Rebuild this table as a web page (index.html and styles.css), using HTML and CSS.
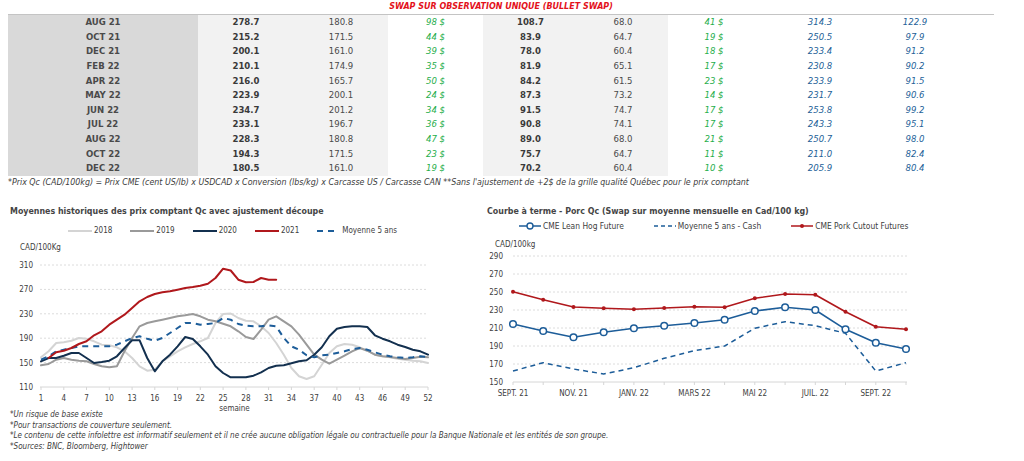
FILE: index.html
```html
<!DOCTYPE html>
<html lang="fr">
<head>
<meta charset="utf-8">
<title>Swap porc</title>
<link rel="stylesheet" href="styles.css">
</head>
<body>
<div class="banner">SWAP SUR OBSERVATION UNIQUE (BULLET SWAP)</div>
<table class="prices">
  <colgroup>
    <col class="c1"><col class="c2"><col class="c3"><col class="c4"><col class="c5"><col class="c6"><col class="c7"><col class="c8"><col class="c9"><col class="c10">
  </colgroup>
  <tbody>
    <tr><td class="m">AUG 21</td><td class="b">278.7</td><td class="n">180.8</td><td class="g">98 $</td><td class="b">108.7</td><td class="n">68.0</td><td class="g">41 $</td><td class="u">314.3</td><td class="u">122.9</td><td></td></tr>
    <tr><td class="m">OCT 21</td><td class="b">215.2</td><td class="n">171.5</td><td class="g">44 $</td><td class="b">83.9</td><td class="n">64.7</td><td class="g">19 $</td><td class="u">250.5</td><td class="u">97.9</td><td></td></tr>
    <tr><td class="m">DEC 21</td><td class="b">200.1</td><td class="n">161.0</td><td class="g">39 $</td><td class="b">78.0</td><td class="n">60.4</td><td class="g">18 $</td><td class="u">233.4</td><td class="u">91.2</td><td></td></tr>
    <tr><td class="m">FEB 22</td><td class="b">210.1</td><td class="n">174.9</td><td class="g">35 $</td><td class="b">81.9</td><td class="n">65.1</td><td class="g">17 $</td><td class="u">230.8</td><td class="u">90.2</td><td></td></tr>
    <tr><td class="m">APR 22</td><td class="b">216.0</td><td class="n">165.7</td><td class="g">50 $</td><td class="b">84.2</td><td class="n">61.5</td><td class="g">23 $</td><td class="u">233.9</td><td class="u">91.5</td><td></td></tr>
    <tr><td class="m">MAY 22</td><td class="b">223.9</td><td class="n">200.1</td><td class="g">24 $</td><td class="b">87.3</td><td class="n">73.2</td><td class="g">14 $</td><td class="u">231.7</td><td class="u">90.6</td><td></td></tr>
    <tr><td class="m">JUN 22</td><td class="b">234.7</td><td class="n">201.2</td><td class="g">34 $</td><td class="b">91.5</td><td class="n">74.7</td><td class="g">17 $</td><td class="u">253.8</td><td class="u">99.2</td><td></td></tr>
    <tr><td class="m">JUL 22</td><td class="b">233.1</td><td class="n">196.7</td><td class="g">36 $</td><td class="b">90.8</td><td class="n">74.1</td><td class="g">17 $</td><td class="u">243.3</td><td class="u">95.1</td><td></td></tr>
    <tr><td class="m">AUG 22</td><td class="b">228.3</td><td class="n">180.8</td><td class="g">47 $</td><td class="b">89.0</td><td class="n">68.0</td><td class="g">21 $</td><td class="u">250.7</td><td class="u">98.0</td><td></td></tr>
    <tr><td class="m">OCT 22</td><td class="b">194.3</td><td class="n">171.5</td><td class="g">23 $</td><td class="b">75.7</td><td class="n">64.7</td><td class="g">11 $</td><td class="u">211.0</td><td class="u">82.4</td><td></td></tr>
    <tr><td class="m">DEC 22</td><td class="b">180.5</td><td class="n">161.0</td><td class="g">19 $</td><td class="b">70.2</td><td class="n">60.4</td><td class="g">10 $</td><td class="u">205.9</td><td class="u">80.4</td><td></td></tr>
  </tbody>
</table>
<p class="footnote">*Prix Qc (CAD/100kg) = Prix CME (cent US/lb) x USDCAD x Conversion (lbs/kg) x Carcasse US / Carcasse CAN **Sans l'ajustement de +2$ de la grille qualité Québec pour le prix comptant</p>

<div class="charts">
  <section class="chart chart-left">
    <h2 class="chart-title">Moyennes historiques des prix comptant Qc avec ajustement découpe</h2>
    <ul class="legend legend-left">
      <li><svg class="swatch" width="24" height="6"><line x1="0" y1="3" x2="24" y2="3" stroke="#d4d4d4" stroke-width="2"/></svg>2018</li>
      <li><svg class="swatch" width="24" height="6"><line x1="0" y1="3" x2="24" y2="3" stroke="#9a9a9a" stroke-width="2"/></svg>2019</li>
      <li><svg class="swatch" width="24" height="6"><line x1="0" y1="3" x2="24" y2="3" stroke="#13304f" stroke-width="2"/></svg>2020</li>
      <li><svg class="swatch" width="24" height="6"><line x1="0" y1="3" x2="24" y2="3" stroke="#b0181c" stroke-width="2"/></svg>2021</li>
      <li class="wide"><svg class="swatch" width="24" height="6"><line x1="0" y1="3" x2="17" y2="3" stroke="#1d5d99" stroke-width="2" stroke-dasharray="6 5"/></svg>Moyenne 5 ans</li>
    </ul>
    <svg class="plot" width="460" height="174" viewBox="0 238 460 174">
      <g class="grid">
        <line x1="40" y1="265" x2="428" y2="265"/>
        <line x1="40" y1="289.4" x2="428" y2="289.4"/>
        <line x1="40" y1="313.8" x2="428" y2="313.8"/>
        <line x1="40" y1="338.2" x2="428" y2="338.2"/>
        <line x1="40" y1="362.6" x2="428" y2="362.6"/>
      </g>
      <line class="axis" x1="40" y1="387" x2="428" y2="387"/>
      <g class="ticks">
        <line x1="41" y1="387" x2="41" y2="390"/><line x1="63.8" y1="387" x2="63.8" y2="390"/><line x1="86.5" y1="387" x2="86.5" y2="390"/><line x1="109.3" y1="387" x2="109.3" y2="390"/><line x1="132.1" y1="387" x2="132.1" y2="390"/><line x1="154.8" y1="387" x2="154.8" y2="390"/><line x1="177.6" y1="387" x2="177.6" y2="390"/><line x1="200.3" y1="387" x2="200.3" y2="390"/><line x1="223.1" y1="387" x2="223.1" y2="390"/><line x1="245.9" y1="387" x2="245.9" y2="390"/><line x1="268.6" y1="387" x2="268.6" y2="390"/><line x1="291.4" y1="387" x2="291.4" y2="390"/><line x1="314.2" y1="387" x2="314.2" y2="390"/><line x1="336.9" y1="387" x2="336.9" y2="390"/><line x1="359.7" y1="387" x2="359.7" y2="390"/><line x1="382.5" y1="387" x2="382.5" y2="390"/><line x1="405.2" y1="387" x2="405.2" y2="390"/><line x1="428" y1="387" x2="428" y2="390"/>
      </g>
      <text class="unit" x="20" y="250">CAD/100Kg</text>
      <g class="ylab">
        <text x="33" y="268">310</text>
        <text x="33" y="292.4">270</text>
        <text x="33" y="316.8">230</text>
        <text x="33" y="341.2">190</text>
        <text x="33" y="365.6">150</text>
        <text x="33" y="390">110</text>
      </g>
      <g class="xlab">
        <text x="41" y="401">1</text><text x="63.8" y="401">4</text><text x="86.5" y="401">7</text><text x="109.3" y="401">10</text><text x="132.1" y="401">13</text><text x="154.8" y="401">16</text><text x="177.6" y="401">19</text><text x="200.3" y="401">22</text><text x="223.1" y="401">25</text><text x="245.9" y="401">28</text><text x="268.6" y="401">31</text><text x="291.4" y="401">34</text><text x="314.2" y="401">37</text><text x="336.9" y="401">40</text><text x="359.7" y="401">43</text><text x="382.5" y="401">46</text><text x="405.2" y="401">49</text><text x="428" y="401">52</text>
        <text x="234.5" y="411">semaine</text>
      </g>
      <polyline class="s2018" points="41,357.3 48.6,351.3 56.2,343 63.8,342.3 71.4,340.7 78.9,338 86.5,338.7 94.1,341.3 101.7,344.7 109.3,345.3 116.9,347.3 124.5,351.3 132.1,358 139.6,366.3 147.2,370.7 154.8,369.7 162.4,361.3 170,356.3 177.6,351.3 185.2,347.3 192.8,344 200.3,341.3 207.9,338 215.5,323 223.1,314 230.7,313.5 238.3,318 245.9,320.7 253.5,321.3 261.1,326.3 268.6,333 276.2,343 283.8,354.7 291.4,368 299,376.3 306.6,379 314.2,376.3 321.8,364.7 329.3,353 336.9,346.3 344.5,344 352.1,344.7 359.7,347.3 367.3,350.7 374.9,354.7 382.5,356.3 390,357.3 397.6,358.7 405.2,359.7 412.8,360.7 420.4,361.3 428,363"/>
      <polyline class="s2019" points="41,365.3 48.6,364 56.2,359.7 63.8,358 71.4,359.7 78.9,360.7 86.5,361.3 94.1,364 101.7,366.3 109.3,367.3 116.9,366.3 124.5,351.3 132.1,338 139.6,326.3 147.2,323 154.8,321.3 162.4,319.7 170,318 177.6,316.3 185.2,315.3 192.8,314 200.3,316.3 207.9,319.7 215.5,321.3 223.1,323.7 230.7,326.3 238.3,331.3 245.9,337 253.5,339 261.1,329.7 268.6,319.7 276.2,316.3 283.8,321.3 291.4,326.3 299,334.7 306.6,344.7 314.2,354.7 321.8,359.7 329.3,363.7 336.9,359.7 344.5,355.7 352.1,351.3 359.7,348 367.3,350.7 374.9,354.7 382.5,356.3 390,357 397.6,358 405.2,359 412.8,358 420.4,356.7 428,357.3"/>
      <polyline class="s2020" points="41,361.3 48.6,358 56.2,358 63.8,355.7 71.4,353 78.9,353 86.5,358 94.1,363 101.7,362 109.3,360.7 116.9,356.3 124.5,348 132.1,340.3 139.6,340.3 147.2,358 154.8,371.3 162.4,361.3 170,354.7 177.6,346.3 185.2,337 192.8,339 200.3,346.3 207.9,354.7 215.5,366.3 223.1,373 230.7,377.3 238.3,377.3 245.9,377.3 253.5,375.7 261.1,372.3 268.6,368 276.2,365.7 283.8,365.3 291.4,363.3 299,361.3 306.6,360.3 314.2,354.7 321.8,347.3 329.3,336.3 336.9,328.7 344.5,327 352.1,326.3 359.7,326.3 367.3,327 374.9,335.3 382.5,338.7 390,341.3 397.6,344.7 405.2,347 412.8,349.7 420.4,351.3 428,354.7"/>
      <polyline class="savg" points="41,359.7 48.6,356.3 56.2,351.3 63.8,349.7 71.4,348 78.9,346.3 86.5,346.3 94.1,346.3 101.7,346.3 109.3,346.3 116.9,344.7 124.5,341.3 132.1,338 139.6,336.3 147.2,338.7 154.8,340.7 162.4,338 170,333 177.6,328 185.2,323 192.8,323 200.3,324.7 207.9,324 215.5,323 223.1,318 230.7,319.7 238.3,324 245.9,325.7 253.5,326.3 261.1,326.3 268.6,325.3 276.2,326.3 283.8,338 291.4,346.3 299,349.7 306.6,355.3 314.2,357.3 321.8,355.3 329.3,354.7 336.9,353 344.5,351.3 352.1,349 359.7,348 367.3,349.7 374.9,352.3 382.5,354.7 390,356.3 397.6,357.3 405.2,358 412.8,357.3 420.4,356.3 428,357"/>
      <polyline class="s2021" points="48.6,358 56.2,352.3 63.8,350.7 71.4,348 78.9,344 86.5,341.3 94.1,335.3 101.7,331.3 109.3,324.7 116.9,319.7 124.5,314.7 132.1,308 139.6,301.3 147.2,297 154.8,294 162.4,292.3 170,291.3 177.6,289.7 185.2,288 192.8,287 200.3,285.7 207.9,283.7 215.5,278 223.1,268.7 230.7,270.5 238.3,279.7 245.9,282.3 253.5,282 261.1,278 268.6,279.7 276.2,279.7"/>
    </svg>
  </section>

  <section class="chart chart-right">
    <h2 class="chart-title">Courbe à terme - Porc Qc (Swap sur moyenne mensuelle en Cad/100 kg)</h2>
    <ul class="legend legend-right">
      <li><svg class="swatch" width="22" height="8"><line x1="0" y1="4" x2="22" y2="4" stroke="#1d5d99" stroke-width="1.5"/><circle cx="11" cy="4" r="3" fill="#fff" stroke="#1d5d99" stroke-width="1.4"/></svg>CME Lean Hog Future</li>
      <li><svg class="swatch" width="22" height="8"><line x1="0" y1="4" x2="22" y2="4" stroke="#1d5d99" stroke-width="1.5" stroke-dasharray="4 3"/></svg>Moyenne 5 ans - Cash</li>
      <li><svg class="swatch" width="22" height="8"><line x1="0" y1="4" x2="22" y2="4" stroke="#b0181c" stroke-width="1.5"/><circle cx="11" cy="4" r="2" fill="#b0181c"/></svg>CME Pork Cutout Futures</li>
    </ul>
    <svg class="plot" width="490" height="167" viewBox="470 233 490 167">
      <g class="grid">
        <line x1="513" y1="256" x2="907" y2="256"/>
        <line x1="513" y1="274" x2="907" y2="274"/>
        <line x1="513" y1="292" x2="907" y2="292"/>
        <line x1="513" y1="310" x2="907" y2="310"/>
        <line x1="513" y1="328" x2="907" y2="328"/>
        <line x1="513" y1="346" x2="907" y2="346"/>
        <line x1="513" y1="364" x2="907" y2="364"/>
      </g>
      <line class="axis" x1="513" y1="382" x2="907" y2="382"/>
      <g class="ticks">
        <line x1="513" y1="382" x2="513" y2="385"/><line x1="543.2" y1="382" x2="543.2" y2="385"/><line x1="573.5" y1="382" x2="573.5" y2="385"/><line x1="603.7" y1="382" x2="603.7" y2="385"/><line x1="633.9" y1="382" x2="633.9" y2="385"/><line x1="664.2" y1="382" x2="664.2" y2="385"/><line x1="694.4" y1="382" x2="694.4" y2="385"/><line x1="724.6" y1="382" x2="724.6" y2="385"/><line x1="754.8" y1="382" x2="754.8" y2="385"/><line x1="785.1" y1="382" x2="785.1" y2="385"/><line x1="815.3" y1="382" x2="815.3" y2="385"/><line x1="845.5" y1="382" x2="845.5" y2="385"/><line x1="875.8" y1="382" x2="875.8" y2="385"/><line x1="906" y1="382" x2="906" y2="385"/>
      </g>
      <text class="unit" x="495" y="247">CAD/100kg</text>
      <g class="ylab">
        <text x="503" y="259">290</text>
        <text x="503" y="277">270</text>
        <text x="503" y="295">250</text>
        <text x="503" y="313">230</text>
        <text x="503" y="331">210</text>
        <text x="503" y="349">190</text>
        <text x="503" y="367">170</text>
        <text x="503" y="385">150</text>
      </g>
      <g class="xlab">
        <text x="513" y="396">SEPT. 21</text><text x="573.5" y="396">NOV. 21</text><text x="633.9" y="396">JANV. 22</text><text x="694.4" y="396">MARS 22</text><text x="754.8" y="396">MAI 22</text><text x="815.3" y="396">JUIL. 22</text><text x="875.8" y="396">SEPT. 22</text>
      </g>
      <polyline class="cash" points="513,371 543.2,362.7 573.5,369 603.7,374 633.9,367.7 664.2,358.3 694.4,350.7 724.6,346 754.8,328.3 785.1,321.7 815.3,325.7 845.5,333.3 875.8,371 906,362.7"/>
      <polyline class="cutout" points="513,291.7 543.2,299.7 573.5,307 603.7,308.3 633.9,309.3 664.2,308 694.4,306.7 724.6,307.3 754.8,298.3 785.1,294 815.3,294.7 845.5,311.7 875.8,326.7 906,329.3"/>
      <g class="cutout-dots">
        <circle cx="513" cy="291.7" r="2"/><circle cx="543.2" cy="299.7" r="2"/><circle cx="573.5" cy="307" r="2"/><circle cx="603.7" cy="308.3" r="2"/><circle cx="633.9" cy="309.3" r="2"/><circle cx="664.2" cy="308" r="2"/><circle cx="694.4" cy="306.7" r="2"/><circle cx="724.6" cy="307.3" r="2"/><circle cx="754.8" cy="298.3" r="2"/><circle cx="785.1" cy="294" r="2"/><circle cx="815.3" cy="294.7" r="2"/><circle cx="845.5" cy="311.7" r="2"/><circle cx="875.8" cy="326.7" r="2"/><circle cx="906" cy="329.3" r="2"/>
      </g>
      <polyline class="leanhog" points="513,324 543.2,331 573.5,337.3 603.7,332.3 633.9,328.3 664.2,325.7 694.4,323 724.6,319.7 754.8,311 785.1,307.3 815.3,310 845.5,329.3 875.8,342.7 906,349"/>
      <g class="leanhog-dots">
        <circle cx="513" cy="324" r="3.3"/><circle cx="543.2" cy="331" r="3.3"/><circle cx="573.5" cy="337.3" r="3.3"/><circle cx="603.7" cy="332.3" r="3.3"/><circle cx="633.9" cy="328.3" r="3.3"/><circle cx="664.2" cy="325.7" r="3.3"/><circle cx="694.4" cy="323" r="3.3"/><circle cx="724.6" cy="319.7" r="3.3"/><circle cx="754.8" cy="311" r="3.3"/><circle cx="785.1" cy="307.3" r="3.3"/><circle cx="815.3" cy="310" r="3.3"/><circle cx="845.5" cy="329.3" r="3.3"/><circle cx="875.8" cy="342.7" r="3.3"/><circle cx="906" cy="349" r="3.3"/>
      </g>
    </svg>
  </section>
</div>

<div class="notes">
  <p>*Un risque de base existe</p>
  <p>*Pour transactions de couverture seulement.</p>
  <p>*Le contenu de cette infolettre est informatif seulement et il ne crée aucune obligation légale ou contractuelle pour la Banque Nationale et les entités de son groupe.</p>
  <p>*Sources: BNC, Bloomberg, Hightower</p>
</div>
</body>
</html>
```

FILE: styles.css
```css
* { box-sizing: border-box; }

body {
  margin: 0;
  width: 1024px;
  height: 461px;
  overflow: hidden;
  background: #fff;
  font-family: "DejaVu Sans Condensed", "DejaVu Sans", sans-serif;
  color: #404040;
}

.banner {
  margin-left: 8px;
  width: 986px;
  height: 15px;
  border-bottom: 1px solid #c4c4c4;
  text-align: center;
  font-size: 8.9px;
  font-weight: bold;
  font-style: italic;
  line-height: 12px;
  color: #e3111b;
}

.prices {
  margin-left: 8px;
  width: 986px;
  table-layout: fixed;
  border-collapse: collapse;
  font-size: 9.5px;
}

.prices td {
  padding: 0;
  height: 14.63px;
  line-height: 14.63px;
  text-align: center;
  white-space: nowrap;
}

.c1 { width: 190px; background: #d9d9d9; }
.c2 { width: 96px; background: #f2f2f2; }
.c3 { width: 94px; background: #f2f2f2; }
.c4 { width: 95px; }
.c5 { width: 95px; background: #f2f2f2; }
.c6 { width: 90px; background: #f2f2f2; }
.c7 { width: 92px; }
.c8 { width: 120px; }
.c9 { width: 70px; }
.c10 { width: 44px; }

.prices .m { font-weight: bold; color: #4a4a4a; }
.prices .b { font-weight: bold; color: #3a3a3a; }
.prices .n { color: #4a4a4a; }
.prices .g { font-style: italic; color: #1fae4b; }
.prices .u { font-style: italic; color: #245f98; }

.footnote {
  margin: 1px 0 0 8px;
  font-size: 8.8px;
  line-height: 11px;
  font-style: italic;
  color: #3c3c3c;
  white-space: nowrap;
}

.charts {
  display: flex;
  margin-top: 17px;
}

.chart {
  display: flex;
  flex-direction: column;
}

.chart-left { width: 470px; }
.chart-right { width: 500px; }

.chart-title {
  margin: 0;
  font-size: 8.8px;
  font-weight: bold;
  line-height: 12px;
  color: #454545;
  white-space: nowrap;
}

.chart-left .chart-title { margin-left: 10px; }
.chart-right .chart-title { margin-left: 17px; }

.legend {
  display: flex;
  margin: 0;
  padding: 0;
  list-style: none;
  font-size: 8px;
  line-height: 12px;
  color: #404040;
}

.legend li {
  display: flex;
  align-items: center;
  white-space: nowrap;
}

.swatch {
  flex: none;
  margin-right: 2px;
}

.legend-left {
  margin-top: 8px;
  padding-left: 68px;
  gap: 18px;
}

.legend-left .wide .swatch { margin-right: 1px; }

.legend-right {
  margin-top: 3px;
  padding-left: 49px;
  gap: 30px;
  font-size: 8.4px;
}

.plot {
  display: block;
  overflow: visible;
  font-family: "DejaVu Sans Condensed", "DejaVu Sans", sans-serif;
}

.chart-left .plot { margin-top: 1px; }
.chart-right .plot { margin-top: 1px; }

.grid line {
  stroke: #dcdcdc;
  stroke-width: 1;
  stroke-dasharray: 2 2;
}

.axis, .ticks line {
  stroke: #d6d6d6;
  stroke-width: 1;
}

.unit { font-size: 8px; fill: #404040; }
.ylab text { font-size: 8px; fill: #404040; text-anchor: end; }
.xlab text { font-size: 8px; fill: #404040; text-anchor: middle; }

polyline { fill: none; stroke-linejoin: round; stroke-linecap: round; }

.s2018 { stroke: #d4d4d4; stroke-width: 2; }
.s2019 { stroke: #9a9a9a; stroke-width: 2; }
.s2020 { stroke: #13304f; stroke-width: 2; }
.s2021 { stroke: #b0181c; stroke-width: 2; }
.savg { stroke: #1d5d99; stroke-width: 2; stroke-dasharray: 6 5; stroke-linecap: butt; }

.cash { stroke: #1d5d99; stroke-width: 1.5; stroke-dasharray: 5 4; stroke-linecap: butt; }
.cutout { stroke: #b0181c; stroke-width: 1.6; }
.cutout-dots circle { fill: #b0181c; }
.leanhog { stroke: #1d5d99; stroke-width: 1.6; }
.leanhog-dots circle { fill: #fff; stroke: #1d5d99; stroke-width: 1.5; }

.notes {
  margin: -2px 0 0 10px;
  font-size: 8px;
  font-style: italic;
  line-height: 10.7px;
  color: #3c3c3c;
}

.notes p {
  margin: 0;
  white-space: nowrap;
}
```
